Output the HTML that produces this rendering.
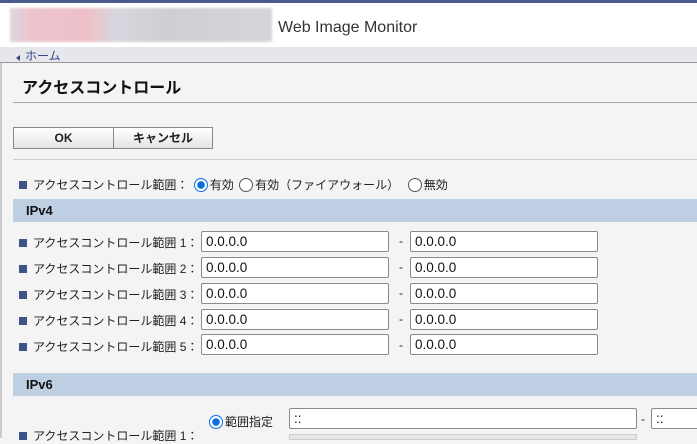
<!DOCTYPE html>
<html><head><meta charset="utf-8"><style>
*{margin:0;padding:0;box-sizing:border-box}
body{width:697px;height:438px;overflow:hidden;background:#f4f4f4;font-family:"Liberation Sans","Noto Sans CJK JP",sans-serif;font-size:12px;color:#222;position:relative}
.a{position:absolute;white-space:nowrap}
.top{left:0;top:0;width:697px;height:3px;background:#4a5a8a}
.hdr{left:0;top:3px;width:697px;height:44px;background:#fff}
.logo{left:10px;top:8px;width:262px;height:34px;background:linear-gradient(90deg,#ddd8e0 0%,#ecc4cc 8%,#eec0c8 30%,#d8d6de 40%,#cfcfd3 60%,#d6d6da 100%);filter:blur(1px)}
.crumb{left:0;top:47px;width:697px;height:16px;background:#e6e7eb;border-bottom:1px solid #999}
.inp{position:absolute;height:21px;background:#fff;border:1px solid #8a8a8a;border-radius:2px;font-size:13.5px;padding-left:4px;line-height:19px;color:#111}
.band{left:13px;width:684px;height:23px;background:#bfcfe3;font-weight:bold;font-size:13px;padding-left:13px;line-height:23px;color:#111}
.sq{display:inline-block;width:8px;height:8px;background:#3c5386;margin-right:6px;vertical-align:0px}
.rad{display:inline-block;width:14px;height:14px;border:1px solid #555;border-radius:50%;background:#fff;vertical-align:-3px;margin:0 2px 0 2px}
.rad.on{border:1px solid #0b6ee0;background:radial-gradient(circle,#0b6ee0 3.5px,#fff 4px)}
.btn{top:127px;height:22px;border:1px solid #888;background:linear-gradient(#fff,#e4e4e4);font-weight:bold;font-size:12px;text-align:center;line-height:20px}
.hr{left:13px;width:684px;height:1px;background:#aaa}
</style></head><body>
<div class="a top"></div>
<div class="a hdr"></div>
<div class="a logo"></div>
<div class="a" style="left:278px;top:19px;font-size:16px;color:#333">Web Image Monitor</div>
<div class="a" style="left:0;top:47px;width:2px;height:391px;background:#ccc"></div>
<div class="a crumb"></div>
<div class="a" style="left:16px;top:55px;width:0;height:0;border-top:3px solid transparent;border-bottom:3px solid transparent;border-right:4px solid #33488a"></div>
<div class="a" style="left:25px;top:49px;font-size:12px;color:#33488a;line-height:14px">ホーム</div>
<div class="a" style="left:22px;top:74px;font-size:16px;font-weight:bold;color:#111">アクセスコントロール</div>
<div class="a hr" style="top:102px"></div>
<div class="a btn" style="left:13px;width:101px">OK</div>
<div class="a btn" style="left:113px;width:100px">キャンセル</div>
<div class="a hr" style="top:159px;background:#ccc"></div>
<div class="a" style="left:19px;top:176px"><span class="sq"></span>アクセスコントロール範囲： <span class="rad on"></span>有効 <span class="rad"></span>有効（ファイアウォール） &nbsp;<span class="rad"></span>無効</div>
<div class="a band" style="top:199px">IPv4</div>

<div class="a" style="left:19px;top:234px"><span class="sq"></span>アクセスコントロール範囲 1：</div>
<div class="inp" style="left:201px;top:231px;width:188px">0.0.0.0</div><div class="a" style="left:399px;top:234px">-</div><div class="inp" style="left:410px;top:231px;width:188px">0.0.0.0</div>
<div class="a" style="left:19px;top:260px"><span class="sq"></span>アクセスコントロール範囲 2：</div>
<div class="inp" style="left:201px;top:257px;width:188px">0.0.0.0</div><div class="a" style="left:399px;top:260px">-</div><div class="inp" style="left:410px;top:257px;width:188px">0.0.0.0</div>
<div class="a" style="left:19px;top:286px"><span class="sq"></span>アクセスコントロール範囲 3：</div>
<div class="inp" style="left:201px;top:283px;width:188px">0.0.0.0</div><div class="a" style="left:399px;top:286px">-</div><div class="inp" style="left:410px;top:283px;width:188px">0.0.0.0</div>
<div class="a" style="left:19px;top:312px"><span class="sq"></span>アクセスコントロール範囲 4：</div>
<div class="inp" style="left:201px;top:309px;width:188px">0.0.0.0</div><div class="a" style="left:399px;top:312px">-</div><div class="inp" style="left:410px;top:309px;width:188px">0.0.0.0</div>
<div class="a" style="left:19px;top:338px"><span class="sq"></span>アクセスコントロール範囲 5：</div>
<div class="inp" style="left:201px;top:334px;width:188px">0.0.0.0</div><div class="a" style="left:399px;top:338px">-</div><div class="inp" style="left:410px;top:334px;width:188px">0.0.0.0</div>

<div class="a band" style="top:373px">IPv6</div>
<div class="a" style="left:207px;top:413px"><span class="rad on"></span>範囲指定</div>
<div class="inp" style="left:289px;top:408px;width:348px">::</div>
<div class="a" style="left:641px;top:412px">-</div>
<div class="inp" style="left:651px;top:408px;width:60px">::</div>
<div class="a" style="left:19px;top:427px"><span class="sq"></span>アクセスコントロール範囲 1：</div>
<div class="a" style="left:289px;top:434px;width:348px;height:6px;background:#e6e6e6;border:1px solid #ccc"></div>
</body></html>
